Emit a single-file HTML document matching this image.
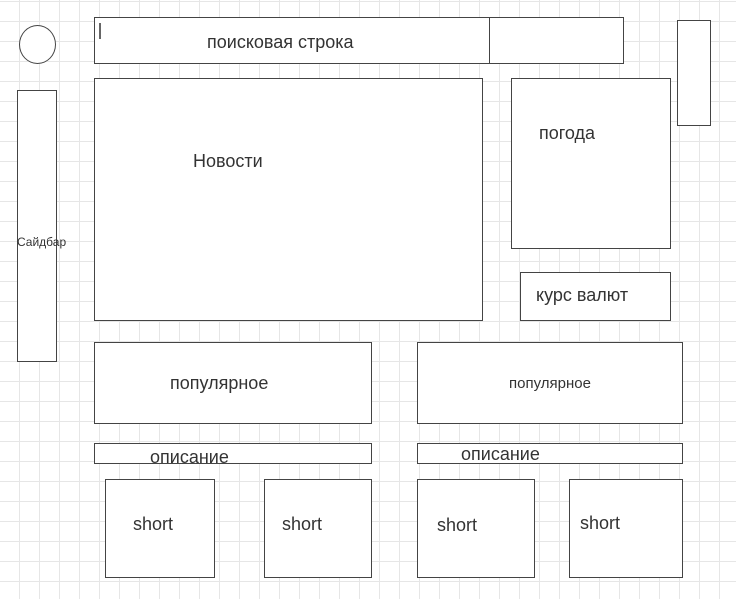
<!DOCTYPE html><html><head><style>
body{margin:0;width:736px;height:599px;overflow:hidden;position:relative;font-family:"Liberation Sans",sans-serif;color:#333;
background-color:#fff;background-image:linear-gradient(#e6e6e6 1px,transparent 1px),linear-gradient(90deg,#e6e6e6 1px,transparent 1px);background-size:20px 20px;background-position:19px 1px;}
.b{position:absolute;border:1px solid #444;background:#fff;box-sizing:border-box}
.t{position:absolute;font-size:18px;white-space:nowrap}
</style></head><body>
<div class="b" style="left:19px;top:25px;width:37px;height:39px;border-radius:50%"></div>
<div class="b" style="left:94px;top:17px;width:530px;height:47px"></div>
<div style="position:absolute;left:489px;top:17px;width:1px;height:47px;background:#444"></div>
<div style="position:absolute;left:99px;top:23px;width:2px;height:16px;background:#666"></div>
<div class="t" style="left:207px;top:32px">поисковая строка</div>
<div class="b" style="left:677px;top:20px;width:34px;height:106px"></div>
<div class="b" style="left:17px;top:90px;width:40px;height:272px"></div>
<div class="t" style="left:17px;top:235px;font-size:12px">Сайдбар</div>
<div class="b" style="left:94px;top:78px;width:389px;height:243px"></div>
<div class="t" style="left:193px;top:151px">Новости</div>
<div class="b" style="left:511px;top:78px;width:160px;height:171px"></div>
<div class="t" style="left:539px;top:123px">погода</div>
<div class="b" style="left:520px;top:272px;width:151px;height:49px"></div>
<div class="t" style="left:536px;top:285px">курс валют</div>
<div class="b" style="left:94px;top:342px;width:278px;height:82px"></div>
<div class="t" style="left:170px;top:373px">популярное</div>
<div class="b" style="left:417px;top:342px;width:266px;height:82px"></div>
<div class="t" style="left:509px;top:375px;font-size:15px">популярное</div>
<div class="b" style="left:94px;top:443px;width:278px;height:21px"></div>
<div class="t" style="left:150px;top:447px">описание</div>
<div class="b" style="left:417px;top:443px;width:266px;height:21px"></div>
<div class="t" style="left:461px;top:444px">описание</div>
<div class="b" style="left:105px;top:479px;width:110px;height:99px"></div>
<div class="t" style="left:133px;top:514px">short</div>
<div class="b" style="left:264px;top:479px;width:108px;height:99px"></div>
<div class="t" style="left:282px;top:514px">short</div>
<div class="b" style="left:417px;top:479px;width:118px;height:99px"></div>
<div class="t" style="left:437px;top:515px">short</div>
<div class="b" style="left:569px;top:479px;width:114px;height:99px"></div>
<div class="t" style="left:580px;top:513px">short</div>
</body></html>
